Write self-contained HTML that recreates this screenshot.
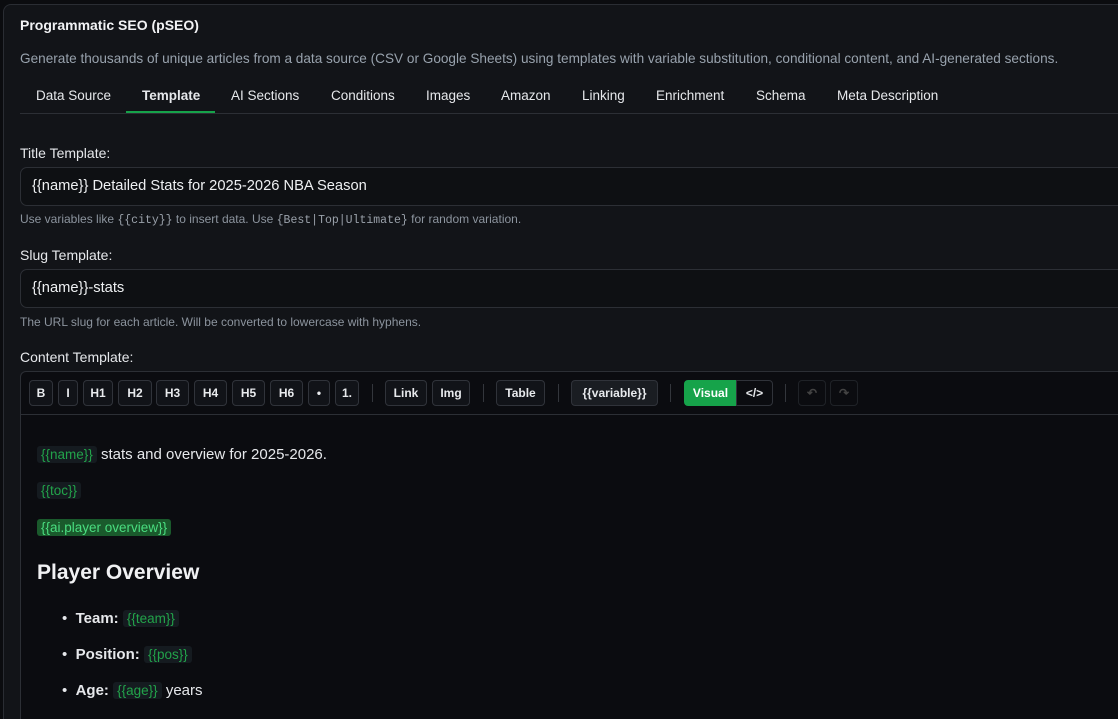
<!DOCTYPE html>
<html style="height:719px;overflow:hidden"><head><meta charset="utf-8"><style>
*{box-sizing:border-box;margin:0;padding:0}
body{width:1118px;height:719px;overflow:hidden;background:#0b0c0f;font-family:"Liberation Sans",sans-serif;color:#e6e8eb;position:relative}
.panel{position:absolute;left:3px;top:4px;width:1115px;height:715px;background:#121418;border:1px solid #2a2d33;border-right:none;border-bottom:none;border-radius:8px 0 0 0}
.a{position:absolute;white-space:nowrap}
.tab{position:absolute;top:88px;font-size:13.5px;color:#e6e8eb}
.inp{position:absolute;left:20px;width:1098px;height:39px;border:1px solid #2c2f35;border-right:none;border-radius:7px 0 0 7px;background:#0e1013;font-size:14.7px;padding:10px 11px;color:#eef0f2}
.help{position:absolute;left:20px;font-size:12px;color:#8c949e}
.help code{font-family:"Liberation Mono",monospace;font-size:11.5px;color:#9aa1aa}
.lbl{position:absolute;left:20px;font-size:14px;color:#e6e8eb}
.btn{position:absolute;top:380px;height:26px;border:1px solid #30333a;border-radius:4px;background:#111318;font-size:12px;font-weight:bold;color:#e8eaed;text-align:center;line-height:24px}
.sep{position:absolute;top:384px;width:1px;height:18px;background:#33363c}
.v{display:inline-block;background:#151b20;color:#22a34a;border-radius:3px;padding:1px 4px;font-size:13.5px}
.vg{background:#1a5a2c;color:#4ade80}
</style></head><body>
<div class="panel"></div>
<div class="a" style="left:20px;top:17px;font-size:14px;font-weight:bold;color:#f2f3f5">Programmatic SEO (pSEO)</div>
<div class="a" style="left:20px;top:51px;font-size:13.6px;color:#98a2ad">Generate thousands of unique articles from a data source (CSV or Google Sheets) using templates with variable substitution, conditional content, and AI-generated sections.</div>
<div class="tab" style="left:36px">Data Source</div>
<div class="tab" style="left:142px;font-weight:bold">Template</div>
<div class="tab" style="left:231px">AI Sections</div>
<div class="tab" style="left:331px">Conditions</div>
<div class="tab" style="left:426px">Images</div>
<div class="tab" style="left:501px">Amazon</div>
<div class="tab" style="left:582px">Linking</div>
<div class="tab" style="left:656px">Enrichment</div>
<div class="tab" style="left:756px">Schema</div>
<div class="tab" style="left:837px">Meta Description</div>
<div class="a" style="left:20px;top:113px;width:1098px;height:1px;background:#2c2f35"></div>
<div class="a" style="left:126px;top:111px;width:89px;height:2px;background:#16a34a"></div>

<div class="lbl" style="top:145px">Title Template:</div>
<div class="inp" style="top:167px">{{name}} Detailed Stats for 2025-2026 NBA Season</div>
<div class="help" style="top:212px">Use variables like <code>{{city}}</code> to insert data. Use <code>{Best|Top|Ultimate}</code> for random variation.</div>
<div class="lbl" style="top:247px">Slug Template:</div>
<div class="inp" style="top:269px">{{name}}-stats</div>
<div class="help" style="top:315px">The URL slug for each article. Will be converted to lowercase with hyphens.</div>
<div class="lbl" style="top:349px">Content Template:</div>

<div class="a" style="left:20px;top:371px;width:1098px;height:348px;border:1px solid #2c2f35;border-right:none;border-bottom:none;border-radius:6px 0 0 0;background:#0b0c10"></div>
<div class="a" style="left:21px;top:414px;width:1097px;height:1px;background:#2c2f35"></div>
<div class="btn" style="left:29px;width:24px">B</div>
<div class="btn" style="left:58px;width:20px">I</div>
<div class="btn" style="left:83px;width:30px">H1</div>
<div class="btn" style="left:118px;width:34px">H2</div>
<div class="btn" style="left:156px;width:33px">H3</div>
<div class="btn" style="left:194px;width:33px">H4</div>
<div class="btn" style="left:232px;width:33px">H5</div>
<div class="btn" style="left:270px;width:33px">H6</div>
<div class="btn" style="left:308px;width:22px">•</div>
<div class="btn" style="left:335px;width:24px">1.</div>
<div class="sep" style="left:372px"></div>
<div class="btn" style="left:385px;width:42px">Link</div>
<div class="btn" style="left:432px;width:38px">Img</div>
<div class="sep" style="left:483px"></div>
<div class="btn" style="left:496px;width:49px">Table</div>
<div class="sep" style="left:558px"></div>
<div class="btn" style="left:571px;width:87px;background:#1a1d22">{{variable}}</div>
<div class="sep" style="left:670px"></div>
<div class="btn" style="left:684px;width:53px;background:#16a34a;border-color:#16a34a;border-radius:4px 0 0 4px;color:#fff">Visual</div>
<div class="btn" style="left:736px;width:37px;border-radius:0 4px 4px 0;background:#0b0c10">&lt;/&gt;</div>
<div class="sep" style="left:785px"></div>
<div class="btn" style="left:798px;width:28px;border-color:#1f2227;background:#0b0c10;color:#444">↶</div>
<div class="btn" style="left:830px;width:28px;border-color:#1f2227;background:#0b0c10;color:#444">↷</div>

<div class="a" style="left:37px;top:446px;font-size:15px"><span class="v">{{name}}</span> stats and overview for 2025-2026.</div>
<div class="a" style="left:37px;top:482px;font-size:15px"><span class="v">{{toc}}</span></div>
<div class="a" style="left:37px;top:519px;font-size:15px"><span class="v vg">{{ai.player overview}}</span></div>
<div class="a" style="left:37px;top:561px;font-size:21px;font-weight:bold;color:#f0f1f3">Player Overview</div>
<div class="a" style="left:62px;top:610px;font-size:15px">•&nbsp;&nbsp;<b>Team:</b> <span class="v">{{team}}</span></div>
<div class="a" style="left:62px;top:646px;font-size:15px">•&nbsp;&nbsp;<b>Position:</b> <span class="v">{{pos}}</span></div>
<div class="a" style="left:62px;top:682px;font-size:15px">•&nbsp;&nbsp;<b>Age:</b> <span class="v">{{age}}</span> years</div>
</body></html>
